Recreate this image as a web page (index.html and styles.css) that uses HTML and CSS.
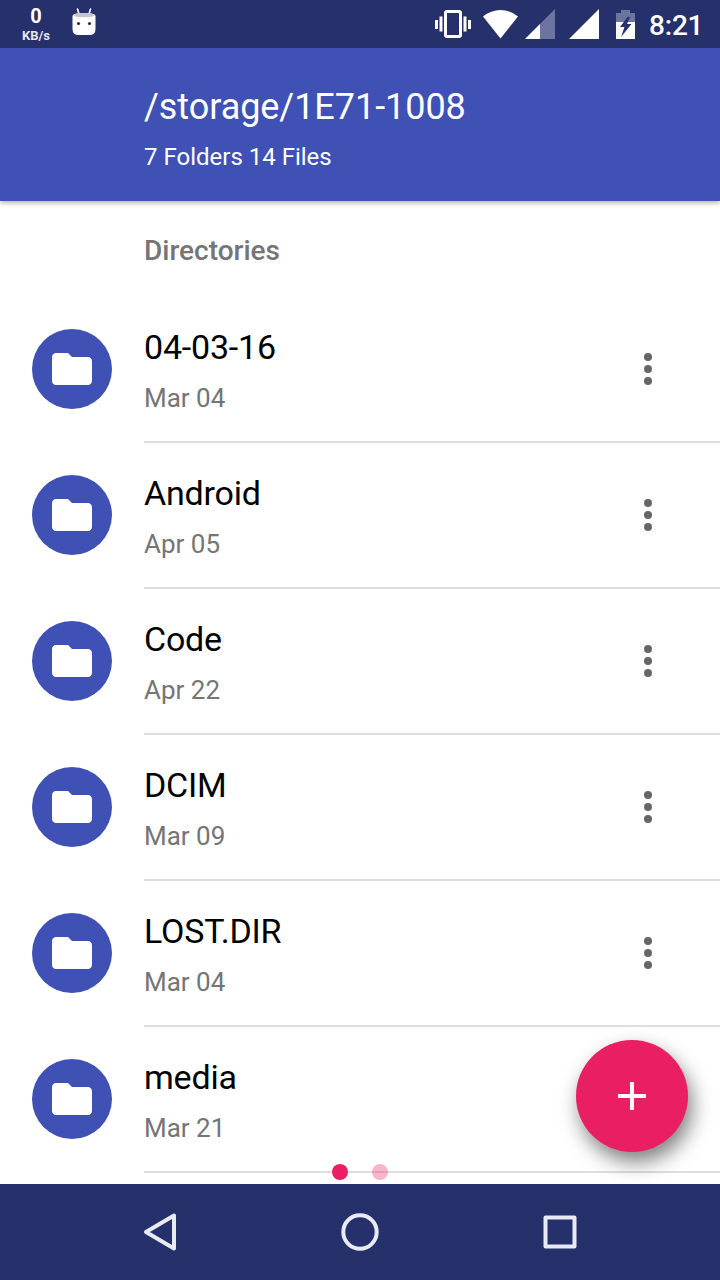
FILE: index.html
```html
<!DOCTYPE html>
<html lang="en">
<head>
    <meta charset="UTF-8">
    <meta name="viewport" content="width=device-width, initial-scale=1.0">
    <title>File Manager</title>
    <link rel="stylesheet" href="styles.css">
</head>
<body>

<!-- Shared icons -->
<svg class="sprite">
    <symbol id="folder" viewBox="0 0 48 48">
        <path d="M20 8H8c-2.200 0-4 1.800-4 4v24c0 2.200 1.800 4 4 4h32c2.200 0 4-1.800 4-4V16c0-2.200-1.800-4-4-4H24z"/>
    </symbol>
    <symbol id="more" viewBox="0 0 8 32">
        <circle cx="4" cy="4" r="4"/>
        <circle cx="4" cy="16" r="4"/>
        <circle cx="4" cy="28" r="4"/>
    </symbol>
</svg>

<div class="status-bar">
    <div class="net-speed">
        <span class="net-value">0</span>
        <span class="net-unit">KB/s</span>
    </div>
    <svg class="icon-robot" width="24" height="28" viewBox="0 0 24 28">
        <path d="M5.500 1L7 6M18.500 1L17 6" stroke="#fff" stroke-width="1.600" stroke-linecap="round"/>
        <path d="M0.500 8q0-3 11.500-3t11.500 3v13q0 6-6 6h-11q-6 0-6-6z" fill="#fff"/>
        <path d="M2 7q0-2 10-2t10 2q0 2.200-10 2.200T2 7z" fill="#c3c4cc"/>
        <circle cx="6.500" cy="15.500" r="1.600" fill="#333"/>
        <circle cx="17.500" cy="15.500" r="1.600" fill="#333"/>
    </svg>
    <div class="status-icons">
        <svg class="icon-vibrate" width="36" height="28" viewBox="0 0 36 28">
            <rect x="10.500" y="1.500" width="15" height="25" rx="1.500" fill="none" stroke="#fff" stroke-width="3"/>
            <path d="M0 10h3v9H0zM4.500 6.500h3v15h-3zM28.500 6.500h3v15h-3zM33 10h3v9h-3z" fill="#fff"/>
        </svg>
        <svg class="icon-wifi" width="35" height="29" viewBox="0 0 35 29">
            <path d="M0 6.500Q8 0 17.500 0T35 6.500L17.500 28.500z" fill="#fff"/>
        </svg>
        <svg class="icon-signal" width="30" height="30" viewBox="0 0 30 30">
            <path d="M0 30L30 0v30z" fill="#6d749f"/>
            <path d="M0 30l15-15v15z" fill="#fff"/>
        </svg>
        <svg class="icon-signal" width="30" height="30" viewBox="0 0 30 30">
            <path d="M0 30L30 0v30z" fill="#fff"/>
        </svg>
        <svg class="icon-battery" width="19" height="29" viewBox="0 0 19 29">
            <path d="M0 3h5V0h9v3h5v9H0z" fill="#6d749f"/>
            <path d="M0 12h19v17H0z" fill="#fff"/>
            <path d="M11.500 7L4 17h4.500L5 27l10.500-13H11l3-7z" fill="#26306a"/>
        </svg>
        <span class="clock">8:21</span>
    </div>
</div>

<header>
    <h1>/storage/1E71-1008</h1>
    <p>7 Folders 14 Files</p>
</header>

<main>
    <h2>Directories</h2>
    <ul class="file-list">
        <li>
            <div class="avatar"><svg><use href="#folder"/></svg></div>
            <div class="details">
                <div class="text">
                    <h3>04-03-16</h3>
                    <p>Mar 04</p>
                </div>
                <svg class="more"><use href="#more"/></svg>
            </div>
        </li>
        <li>
            <div class="avatar"><svg><use href="#folder"/></svg></div>
            <div class="details">
                <div class="text">
                    <h3>Android</h3>
                    <p>Apr 05</p>
                </div>
                <svg class="more"><use href="#more"/></svg>
            </div>
        </li>
        <li>
            <div class="avatar"><svg><use href="#folder"/></svg></div>
            <div class="details">
                <div class="text">
                    <h3>Code</h3>
                    <p>Apr 22</p>
                </div>
                <svg class="more"><use href="#more"/></svg>
            </div>
        </li>
        <li>
            <div class="avatar"><svg><use href="#folder"/></svg></div>
            <div class="details">
                <div class="text">
                    <h3>DCIM</h3>
                    <p>Mar 09</p>
                </div>
                <svg class="more"><use href="#more"/></svg>
            </div>
        </li>
        <li>
            <div class="avatar"><svg><use href="#folder"/></svg></div>
            <div class="details">
                <div class="text">
                    <h3>LOST.DIR</h3>
                    <p>Mar 04</p>
                </div>
                <svg class="more"><use href="#more"/></svg>
            </div>
        </li>
        <li>
            <div class="avatar"><svg><use href="#folder"/></svg></div>
            <div class="details">
                <div class="text">
                    <h3>media</h3>
                    <p>Mar 21</p>
                </div>
                <svg class="more"><use href="#more"/></svg>
            </div>
        </li>
    </ul>

    <div class="page-dots">
        <span class="dot active"></span>
        <span class="dot"></span>
    </div>

    <button class="fab" aria-label="Add">
        <svg width="28" height="28" viewBox="0 0 28 28">
            <path d="M12 0h4v12h12v4H16v12h-4V16H0v-4h12z" fill="#fff"/>
        </svg>
    </button>
</main>

<nav>
    <svg width="40" height="40" viewBox="0 0 40 40">
        <path d="M34 3.500v33L6 20z"/>
    </svg>
    <svg width="40" height="40" viewBox="0 0 40 40">
        <circle cx="20" cy="20" r="16.700"/>
    </svg>
    <svg width="40" height="40" viewBox="0 0 40 40">
        <rect x="5.500" y="5.500" width="29" height="29"/>
    </svg>
</nav>

</body>
</html>
```
FILE: styles.css
```css
* {
    box-sizing: border-box;
}
body {
    font-family: Roboto, sans-serif;
    background-color: #fff;
    margin: 0;
    height: 1280px;
    display: flex;
    flex-direction: column;
    overflow: hidden;
}
h1, h2, h3, p, ul {
    margin: 0;
    padding: 0;
    font-weight: 400;
}
svg {
    display: block;
    flex: none;
}
.sprite {
    display: none;
}

/* Status bar */
.status-bar {
    height: 48px;
    flex: none;
    display: flex;
    align-items: center;
    padding: 0 18px 0 21px;
    background-color: #26306a;
    color: #fff;
    z-index: 2;
}
.net-speed {
    width: 30px;
    display: flex;
    flex-direction: column;
    align-items: center;
    padding-top: 2px;
    font-weight: 700;
}
.net-value {
    font-size: 20px;
    line-height: 21px;
}
.net-unit {
    font-size: 13px;
    line-height: 17px;
    color: #e4e6f0;
}
.icon-robot {
    margin: 0 0 4px 21px;
}
.status-icons {
    display: flex;
    align-items: center;
    margin-left: auto;
}
.icon-wifi {
    margin-left: 12px;
}
.icon-signal {
    margin-left: 7px;
}
.icon-signal + .icon-signal {
    margin-left: 14px;
}
.icon-battery {
    margin-left: 17px;
}
.clock {
    margin-left: 14px;
    width: 53px;
    font-size: 28px;
    line-height: 32px;
    font-weight: 500;
    padding-top: 3px;
    letter-spacing: -0.2px;
}

/* Toolbar */
header {
    height: 153px;
    flex: none;
    padding: 37px 0 0 144px;
    background-color: #3f51b5;
    color: #fff;
    box-shadow: 0 2px 5px rgba(0, 0, 0, 0.3);
    z-index: 1;
}
header h1 {
    font-size: 36px;
    line-height: 44px;
    letter-spacing: -0.05px;
}
header p {
    margin-top: 12px;
    font-size: 24px;
    line-height: 32px;
}

/* File list */
main {
    height: 983px;
    flex: none;
    position: relative;
    overflow: hidden;
}
h2 {
    height: 96px;
    padding-left: 144px;
    font-size: 28px;
    line-height: 100px;
    font-weight: 500;
    color: #757575;
}
.file-list {
    list-style-type: none;
}
.file-list li {
    display: flex;
    height: 146px;
    padding-left: 32px;
}
.avatar {
    width: 80px;
    height: 80px;
    margin: 32px 32px 0 0;
    display: flex;
    align-items: center;
    justify-content: center;
    border-radius: 50%;
    background-color: #3f51b5;
}
.avatar svg {
    width: 48px;
    height: 48px;
    fill: #fff;
}
.details {
    flex: 1;
    display: flex;
    justify-content: space-between;
    padding-right: 68px;
    border-bottom: 2px solid #dedede;
}
.text {
    padding-top: 30px;
}
.text h3 {
    font-size: 34px;
    line-height: 40px;
    letter-spacing: -0.2px;
    color: #000;
}
.text p {
    margin-top: 15px;
    font-size: 26px;
    line-height: 32px;
    color: #757575;
}
.more {
    width: 8px;
    height: 32px;
    margin-top: 56px;
    fill: #666;
}

.page-dots {
    position: absolute;
    left: 332px;
    bottom: 4px;
    display: flex;
    gap: 24px;
}
.dot {
    width: 16px;
    height: 16px;
    border-radius: 50%;
    background-color: rgba(233, 30, 99, 0.33);
}
.dot.active {
    background-color: #e91e63;
}
.fab {
    position: absolute;
    right: 32px;
    bottom: 32px;
    width: 112px;
    height: 112px;
    display: flex;
    align-items: center;
    justify-content: center;
    padding: 0;
    border: none;
    border-radius: 50%;
    background-color: #e91e63;
    box-shadow: 4px 10px 20px rgba(0, 0, 0, 0.5);
}

/* Navigation bar */
nav {
    height: 96px;
    flex: none;
    display: flex;
    align-items: center;
    justify-content: center;
    gap: 160px;
    background-color: #26306a;
}
nav svg {
    fill: none;
    stroke: #e8eaf6;
    stroke-width: 4;
    stroke-linejoin: round;
}
```
